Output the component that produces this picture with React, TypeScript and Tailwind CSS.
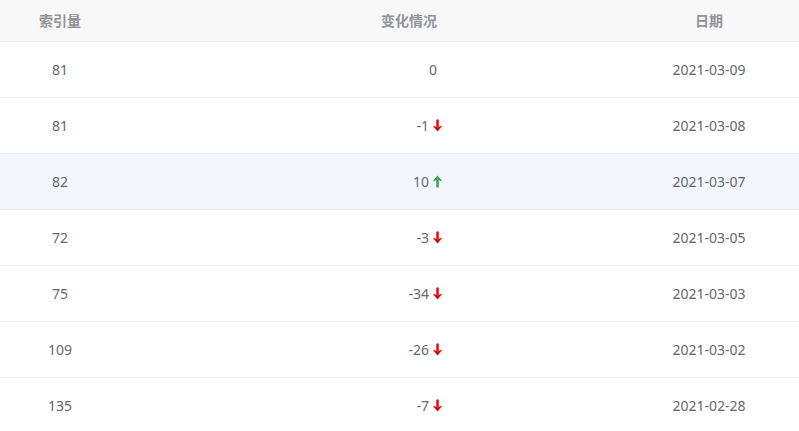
import React from "react"

const rows = [
  { count: 81, change: 0, date: "2021-03-09" },
  { count: 81, change: -1, date: "2021-03-08" },
  { count: 82, change: 10, date: "2021-03-07" },
  { count: 72, change: -3, date: "2021-03-05" },
  { count: 75, change: -34, date: "2021-03-03" },
  { count: 109, change: -26, date: "2021-03-02" },
  { count: 135, change: -7, date: "2021-02-28" },
]

const ArrowDown = () => (
  <svg width="11" height="13" viewBox="0 0 11 13" className="ml-[3px]">
    <path d="M5.5 0.5V8" stroke="#e50012" strokeWidth="2.4" />
    <path d="M0.5 6.5L5.5 12.5L10.5 6.5L5.5 8.2Z" fill="#e50012" />
  </svg>
)

const ArrowUp = () => (
  <svg width="11" height="13" viewBox="0 0 11 13" className="ml-[3px]">
    <path d="M5.5 12.5V5" stroke="#3f9e47" strokeWidth="2.4" />
    <path d="M0.5 6.5L5.5 0.5L10.5 6.5L5.5 4.8Z" fill="#3f9e47" />
  </svg>
)

export default function App() {
  return (
    <div className="w-[799px] h-[431px] overflow-hidden bg-white font-['Noto_Sans','Noto_Sans_CJK_SC',sans-serif] text-[14px]">
      {/* header */}
      <div className="grid grid-cols-[120px_1fr_180px] h-[42px] bg-[#f8f8f9] border-b border-[#ebeef5] text-[#909399] font-semibold">
        <div className="flex items-center justify-center">索引量</div>
        <div className="flex items-center justify-end pr-[182px]">变化情况</div>
        <div className="flex items-center justify-center">日期</div>
      </div>

      {rows.map((r, i) => (
        <div
          key={i}
          className={
            "grid grid-cols-[120px_1fr_180px] h-[56px] border-b border-[#ebeef5] text-[#66686c] " +
            (i === 2 ? "bg-[#f3f7fd]" : "bg-white")
          }
        >
          <div className="flex items-center justify-center">{r.count}</div>
          <div className={"flex items-center justify-end " + (r.change === 0 ? "pr-[182px]" : "pr-[176px]")}>
            <span>{r.change}</span>
            {r.change > 0 && <ArrowUp />}
            {r.change < 0 && <ArrowDown />}
          </div>
          <div className="flex items-center justify-center">{r.date}</div>
        </div>
      ))}
    </div>
  )
}
